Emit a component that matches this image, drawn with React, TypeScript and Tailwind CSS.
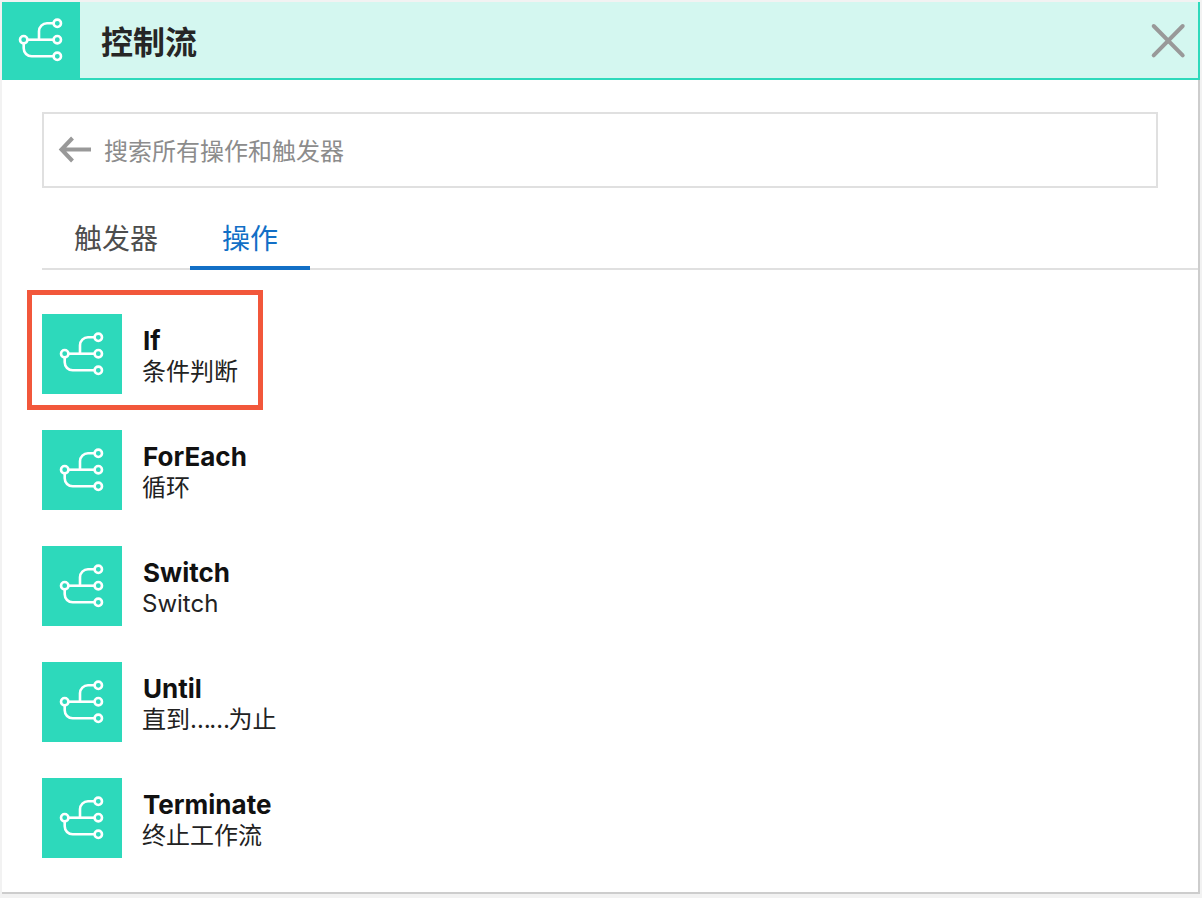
const items = [
  { name: 'If', desc: '条件判断', active: true },
  { name: 'ForEach', desc: '循环' },
  { name: 'Switch', desc: 'Switch' },
  { name: 'Until', desc: <>直到<span className="tracking-[-1.5px]">……</span>为止</> },
  { name: 'Terminate', desc: '终止工作流' },
];

function FlowIcon() {
  return (
    <svg width="64" height="64" viewBox="0 0 64 64" fill="none" stroke="white" strokeWidth="2.6">
      <circle cx="14.7" cy="31.7" r="3.7" />
      <circle cx="48.3" cy="15.3" r="3.7" />
      <circle cx="48.3" cy="31.7" r="3.7" />
      <circle cx="48.3" cy="48.3" r="3.7" />
      <path d="M18.4 31.7H44.6" />
      <path d="M30 31.7V23.3a8 8 0 0 1 8-8h6.6" />
      <path d="M14.7 35.4V40.3a8 8 0 0 0 8 8H44.6" />
    </svg>
  );
}

export default function App() {
  return (
    <div className="w-[1202px] h-[898px] bg-[#f2f2f2] pt-[2px] pl-[2px] font-['Inter','Noto_Sans_CJK_SC',sans-serif]">
      <div className="w-[1198px] h-[892px] bg-white border-r-2 border-b-2 border-[#cdcdcd] flex flex-col">
        <div className="h-[76px] shrink-0 flex items-center bg-[#d4f7f0] border-b-2 border-r-2 border-[#2dd9bb] box-content -mr-[2px]">
          <div className="w-[78px] h-full bg-[#2dd9bb] flex items-center justify-center shrink-0">
            <FlowIcon />
          </div>
          <div className="ml-[21px] text-[32px] leading-[40px] font-bold text-[#262626] font-['Noto_Sans_CJK_SC',sans-serif]">控制流</div>
          <svg className="ml-auto mr-[10px]" width="40" height="40" viewBox="0 0 40 40" stroke="#999999" strokeWidth="4" strokeLinecap="round">
            <path d="M5.7 6L34.7 35.3M34.7 6L5.7 35.3" />
          </svg>
        </div>

        <div className="pl-[40px] pt-[32px]">
          <div className="w-[1116px] h-[76px] border-2 border-[#e0e0e0] flex items-center pl-[14px]">
            <svg width="34" height="28" viewBox="0 0 34 28" fill="none" stroke="#999999" strokeWidth="4">
              <path d="M33 13.5H4M14.5 2L3.5 13.5L14.5 25" />
            </svg>
            <span className="ml-[12px] text-[24px] leading-[32px] text-[#8c8c8c] font-['Noto_Sans_CJK_SC',sans-serif]">搜索所有操作和触发器</span>
          </div>

          <div className="mt-[22px] h-[60px] border-b-2 border-[#e0e0e0] flex">
            <div className="w-[148px] pl-[32px] pt-[7px] text-[28px] leading-[40px] text-[#4d4d4d] font-['Noto_Sans_CJK_SC',sans-serif]">触发器</div>
            <div className="w-[120px] h-[60px] border-b-4 border-[#126fc6] text-center pt-[7px] text-[28px] leading-[40px] text-[#126fc6] font-['Noto_Sans_CJK_SC',sans-serif]">操作</div>
          </div>

          <div className="mt-[44px] flex flex-col gap-[36px]">
            {items.map((item) => (
              <div key={item.name} className="relative flex items-center h-[80px]">
                {item.active && (
                  <div className="absolute left-[-15px] top-[-24px] w-[235.5px] h-[119.5px] border-[5.5px] border-[#f2573b]" />
                )}
                <div className="w-[80px] h-[80px] bg-[#2dd9bb] flex items-center justify-center shrink-0">
                  <FlowIcon />
                </div>
                <div className="ml-[20px] mt-[4px]">
                  <div className="pl-[1px] text-[26px] leading-[31px] font-bold text-[#111111]">{item.name}</div>
                  <div className="text-[24px] leading-[31px] text-[#222222]">{item.desc}</div>
                </div>
              </div>
            ))}
          </div>
        </div>
      </div>
    </div>
  );
}
